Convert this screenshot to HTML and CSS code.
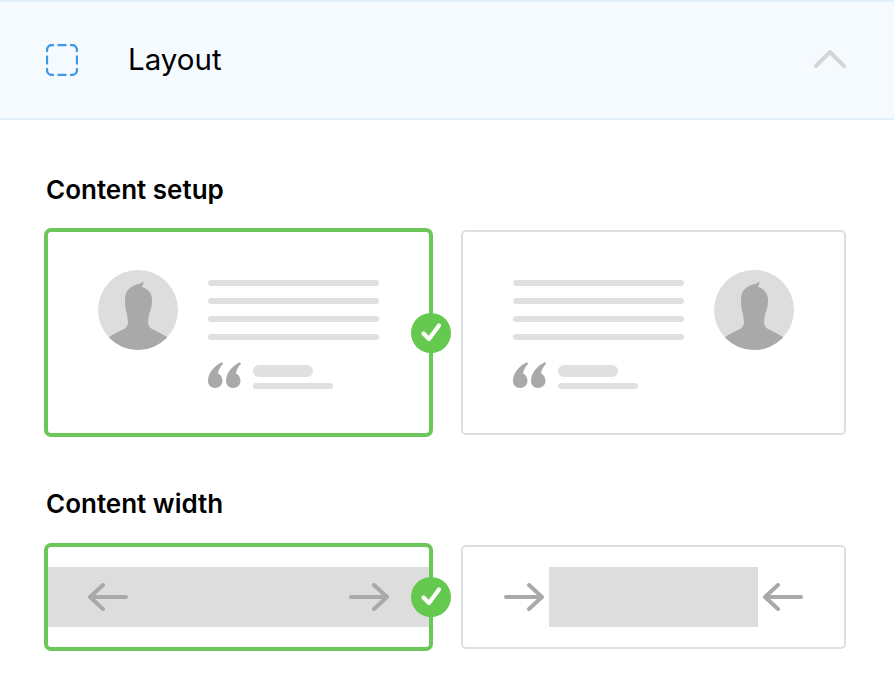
FILE: index.html
```html
<!DOCTYPE html>
<html lang="en">
<head>
<meta charset="utf-8">
<title>Layout</title>
<link rel="stylesheet" href="styles.css">
</head>
<body>
<header class="panel-header">
  <svg class="icon-dashed" width="32" height="32" viewBox="0 0 32 32"><path d="M1 8V6A5 5 0 0 1 6 1H8M11.500 1H20.500M24 1H26A5 5 0 0 1 31 6V8M31 11.500V20.500M31 24V26A5 5 0 0 1 26 31H24M20.500 31H11.500M8 31H6A5 5 0 0 1 1 26V24M1 20.500V11.500" fill="none" stroke="#3f97ea" stroke-width="2.300"/></svg>
  <h1 class="panel-title">Layout</h1>
  <svg class="icon-chevron" width="34" height="20" viewBox="0 0 34 20"><path d="M3 16L17 2L31 16" fill="none" stroke="#d2d6d9" stroke-width="4" stroke-linecap="round" stroke-linejoin="round"/></svg>
</header>
<main class="panel-body">
  <h2 class="section-title">Content setup</h2>
  <div class="options setup-options">
    <div class="card selected setup">
      <svg class="avatar" width="80" height="80" viewBox="0 0 80 80"><defs><clipPath id="c1"><circle cx="40" cy="40" r="40"/></clipPath></defs><circle cx="40" cy="40" r="40" fill="#dddddd"/><path clip-path="url(#c1)" d="M45.500 11.500C42 15 36 14 32 18C28 21 27 25 27 31C27 37 28 41 29 44L30 52C30 56 28 58 25 59.500C20 62 15 64 10 68L10 80L70 80L70 68C65 64 60 62 55 59.500C52 58 50 56 50 52L51 44C53 40 54 36 54 30C54 24 51 19 44 17C45 15 45.500 13 45.500 11.500Z" fill="#a9a9a9"/></svg>
      <div class="copy">
        <span class="line"></span><span class="line"></span><span class="line"></span><span class="line"></span>
        <div class="quote">
          <svg width="33" height="26" viewBox="0 0 33 26"><path d="M14 0C6 4 0 11 0 19C0 23 3 26 7 26C11 26 14.500 23 14.500 19C14.500 15 12.500 12.500 10 11.500C10.500 8 12.500 4 15 2Z" fill="#a9a9a9"/><path d="M32 0C24 4 18 11 18 19C18 23 21 26 25 26C29 26 32.500 23 32.500 19C32.500 15 30.500 12.500 28 11.500C28.500 8 30.500 4 33 2Z" fill="#a9a9a9"/></svg>
          <div class="quote-lines"><span class="pill"></span><span class="byline"></span></div>
        </div>
      </div>
      <svg class="check" width="40" height="40" viewBox="0 0 40 40"><circle cx="20" cy="20" r="20" fill="#66c94f"/><path d="M12.500 20.500L18 26L28 12.500" fill="none" stroke="#fff" stroke-width="4.200" stroke-linecap="round" stroke-linejoin="round"/></svg>
    </div>
    <div class="card setup">
      <div class="copy">
        <span class="line"></span><span class="line"></span><span class="line"></span><span class="line"></span>
        <div class="quote">
          <svg width="33" height="26" viewBox="0 0 33 26"><path d="M14 0C6 4 0 11 0 19C0 23 3 26 7 26C11 26 14.500 23 14.500 19C14.500 15 12.500 12.500 10 11.500C10.500 8 12.500 4 15 2Z" fill="#a9a9a9"/><path d="M32 0C24 4 18 11 18 19C18 23 21 26 25 26C29 26 32.500 23 32.500 19C32.500 15 30.500 12.500 28 11.500C28.500 8 30.500 4 33 2Z" fill="#a9a9a9"/></svg>
          <div class="quote-lines"><span class="pill"></span><span class="byline"></span></div>
        </div>
      </div>
      <svg class="avatar" width="80" height="80" viewBox="0 0 80 80"><defs><clipPath id="c2"><circle cx="40" cy="40" r="40"/></clipPath></defs><circle cx="40" cy="40" r="40" fill="#dddddd"/><path clip-path="url(#c2)" d="M45.500 11.500C42 15 36 14 32 18C28 21 27 25 27 31C27 37 28 41 29 44L30 52C30 56 28 58 25 59.500C20 62 15 64 10 68L10 80L70 80L70 68C65 64 60 62 55 59.500C52 58 50 56 50 52L51 44C53 40 54 36 54 30C54 24 51 19 44 17C45 15 45.500 13 45.500 11.500Z" fill="#a9a9a9"/></svg>
    </div>
  </div>
  <h2 class="section-title width-title">Content width</h2>
  <div class="options">
    <div class="card selected width">
      <div class="band band-full">
        <svg width="40" height="28" viewBox="0 0 40 28"><path d="M38 14H2M15 2L2 14L15 26" fill="none" stroke="#a9a9a9" stroke-width="4" stroke-linecap="round" stroke-linejoin="round"/></svg>
        <svg width="40" height="28" viewBox="0 0 40 28"><path d="M2 14H38M25 2L38 14L25 26" fill="none" stroke="#a9a9a9" stroke-width="4" stroke-linecap="round" stroke-linejoin="round"/></svg>
      </div>
      <svg class="check" width="40" height="40" viewBox="0 0 40 40"><circle cx="20" cy="20" r="20" fill="#66c94f"/><path d="M12.500 20.500L18 26L28 12.500" fill="none" stroke="#fff" stroke-width="4.200" stroke-linecap="round" stroke-linejoin="round"/></svg>
    </div>
    <div class="card width boxed">
      <svg width="40" height="28" viewBox="0 0 40 28"><path d="M2 14H38M25 2L38 14L25 26" fill="none" stroke="#a9a9a9" stroke-width="4" stroke-linecap="round" stroke-linejoin="round"/></svg>
      <div class="band band-boxed"></div>
      <svg width="40" height="28" viewBox="0 0 40 28"><path d="M38 14H2M15 2L2 14L15 26" fill="none" stroke="#a9a9a9" stroke-width="4" stroke-linecap="round" stroke-linejoin="round"/></svg>
    </div>
  </div>
</main>
</body>
</html>
```
FILE: styles.css
```css
* { box-sizing: border-box; }
html, body { margin: 0; padding: 0; background: #fff; }
body { width: 894px; height: 694px; overflow: hidden; font-family: "Inter", "Liberation Sans", sans-serif; color: #000; }

.panel-header {
  height: 120px;
  display: flex;
  align-items: center;
  padding: 0 47px 0 46px;
  background: #f5faff;
  border-top: 2px solid #e3effc;
  border-bottom: 2px solid #e3effc;
}
.icon-dashed { flex: none; }
.icon-chevron { flex: none; }
.panel-title {
  flex: 1;
  margin: 0 0 2px 50px;
  font-size: 29.500px;
  font-weight: 400;
  line-height: 34px;
}
.panel-body { padding: 54px 48px 0 46px; }
.section-title {
  margin: 0 0 24px;
  font-size: 26px;
  font-weight: 600;
  line-height: 32px;
}
.width-title { margin-bottom: 25px; }
.options {
  display: grid;
  grid-template-columns: 385px 385px;
  column-gap: 30px;
}
.setup-options { margin-bottom: 53px; }
.card {
  position: relative;
  display: flex;
  align-items: center;
  border: 2px solid #dfdfdf;
  border-radius: 5px;
  background: #fff;
}
.card.selected {
  border-color: #6cc75a;
  box-shadow: 0 0 0 2px #6cc75a;
}
.card.setup {
  height: 205px;
  padding: 38px 50px 0;
  align-items: flex-start;
  gap: 30px;
}
.avatar { flex: none; }
.copy { width: 171px; flex: none; padding-top: 10px; display: flex; flex-direction: column; }
.line {
  display: block;
  height: 6px;
  margin-bottom: 12px;
  border-radius: 3px;
  background: #e0e0e0;
}
.quote { display: flex; gap: 12px; margin-top: 10px; }
.quote-lines { display: flex; flex-direction: column; padding-top: 3px; }
.pill { display: block; width: 60px; height: 12px; border-radius: 6px; background: #e0e0e0; }
.byline { display: block; width: 80px; height: 6px; margin-top: 6px; border-radius: 3px; background: #e0e0e0; }
.check { position: absolute; right: -22px; top: 50%; margin-top: -20px; }
.card.width { height: 104px; }
.band { height: 60px; background: #dddddd; }
.band-full {
  flex: 1;
  display: flex;
  align-items: center;
  justify-content: space-between;
  padding: 0 40px;
}
.boxed { justify-content: center; gap: 5px; }
.band-boxed { width: 209px; }
```
